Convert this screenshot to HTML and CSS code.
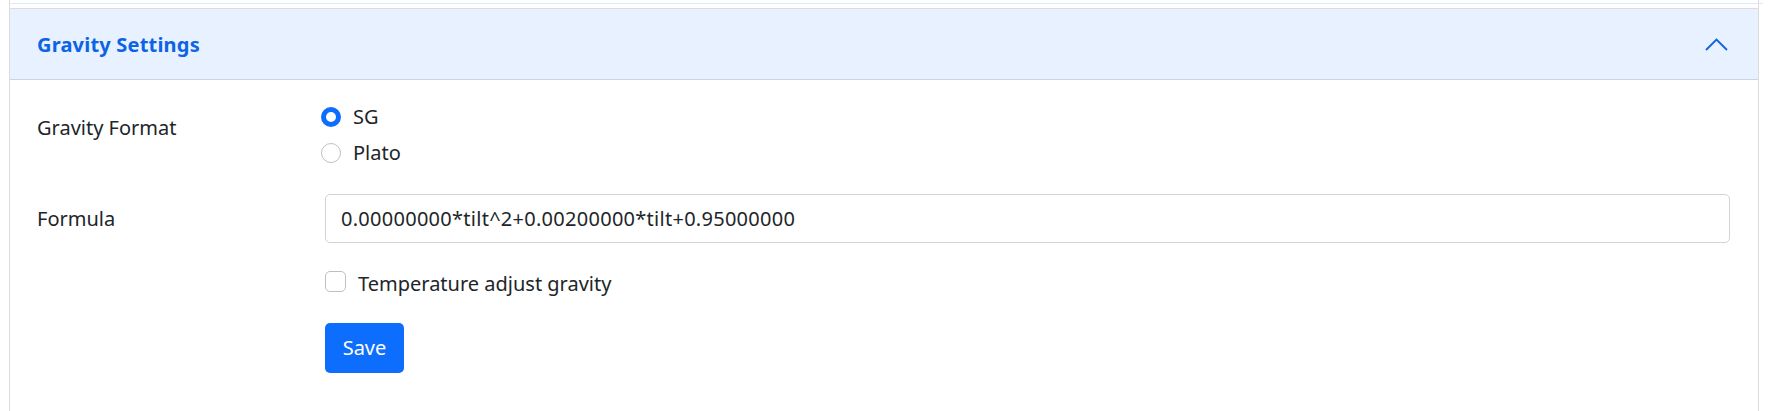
FILE: index.html
```html
<!DOCTYPE html>
<html lang="en">
<head>
<meta charset="utf-8">
<title>Gravity Settings</title>
<link rel="stylesheet" href="styles.css">
</head>
<body>
<div class="page">
  <div class="topline"></div>
  <div class="card">
    <div class="prev"></div>
    <div class="item">
      <div class="head">
        <span class="title">Gravity Settings</span>
        <svg class="chev" width="25" height="14" viewBox="0 0 25 14"><polyline points="2,12 12.5,1.5 23,12" fill="none" stroke="#0c63e4" stroke-width="1.8"/></svg>
      </div>
      <div class="body">
        <div class="row row-top">
          <div class="label label-top">Gravity Format</div>
          <div class="field radios">
            <div class="check"><span class="radio on"></span><span class="ctext">SG</span></div>
            <div class="check second"><span class="radio"></span><span class="ctext">Plato</span></div>
          </div>
        </div>
        <div class="row row-mid">
          <div class="label">Formula</div>
          <div class="field"><div class="input">0.00000000*tilt^2+0.00200000*tilt+0.95000000</div></div>
        </div>
        <div class="row row-cb">
          <div class="label"></div>
          <div class="field"><div class="check cb"><span class="box"></span><span class="ctext">Temperature adjust gravity</span></div></div>
        </div>
        <div class="row row-btn">
          <div class="label"></div>
          <div class="field"><button class="btn">Save</button></div>
        </div>
      </div>
    </div>
  </div>
</div>
</body>
</html>
```
FILE: styles.css
```css
html, body {
  margin: 0;
  padding: 0;
  background: #ffffff;
  overflow: hidden;
}
body {
  font-family: "Segoe UI", "Noto Sans", "Liberation Sans", sans-serif;
  font-size: 20px;
  line-height: 30px;
  color: #212529;
}
.page {
  position: relative;
  height: 411px;
  overflow: hidden;
}
.topline {
  position: absolute;
  left: 10px;
  top: 3px;
  width: 1753px;
  height: 1px;
  background: #dde8f8;
}
.card {
  margin-left: 9px;
  width: 1750px;
  height: 411px;
  box-sizing: border-box;
  border-left: 1px solid #dcdcdc;
  border-right: 1px solid #dcdcdc;
}
.prev {
  height: 8px;
}
.item {
  border-top: 1px solid #dcdcdc;
}
.head {
  height: 71px;
  box-sizing: border-box;
  background: #e7f1ff;
  box-shadow: inset 0 -1px 0 #cbd4e0;
  display: flex;
  align-items: center;
  justify-content: space-between;
  padding-left: 27px;
  padding-right: 29px;
}
.title {
  font-weight: 700;
  color: #0c63e4;
  letter-spacing: 0.2px;
}
.chev {
  display: block;
  margin-top: 1px;
}
.body {
  padding: 22px 0 0 27px;
}
.row {
  display: grid;
  grid-template-columns: 288px 1405px;
}
.row-top {
  align-items: start;
}
.label-top {
  padding-top: 11px;
}
.row-mid {
  margin-top: 26px;
  align-items: center;
}
.row-cb {
  margin-top: 26px;
}
.row-btn {
  margin-top: 24px;
}
.radios {
  margin-left: -4px;
}
.check {
  display: flex;
  align-items: center;
  height: 30px;
}
.check.second {
  margin-top: 6px;
}
.radio {
  width: 20px;
  height: 20px;
  box-sizing: border-box;
  border-radius: 50%;
  border: 1px solid #bfbfbf;
  background: #ffffff;
  margin-right: 12px;
  flex: none;
}
.radio.on {
  border: 5px solid #0d6efd;
  background: #ffffff;
}
.cb {
  align-items: flex-start;
}
.box {
  width: 21px;
  height: 21px;
  box-sizing: border-box;
  border: 1px solid #bfbfbf;
  border-radius: 5px;
  margin-top: 2px;
  margin-right: 12px;
  flex: none;
}
.input {
  height: 49px;
  box-sizing: border-box;
  border: 1px solid #ced4da;
  border-radius: 5px;
  padding: 0 15px;
  display: flex;
  align-items: center;
  letter-spacing: 0.27px;
}
.btn {
  font: inherit;
  line-height: 30px;
  height: 50px;
  min-width: 79px;
  padding: 0 15px;
  border: none;
  border-radius: 5px;
  background: #0d6efd;
  color: #ffffff;
}
```
